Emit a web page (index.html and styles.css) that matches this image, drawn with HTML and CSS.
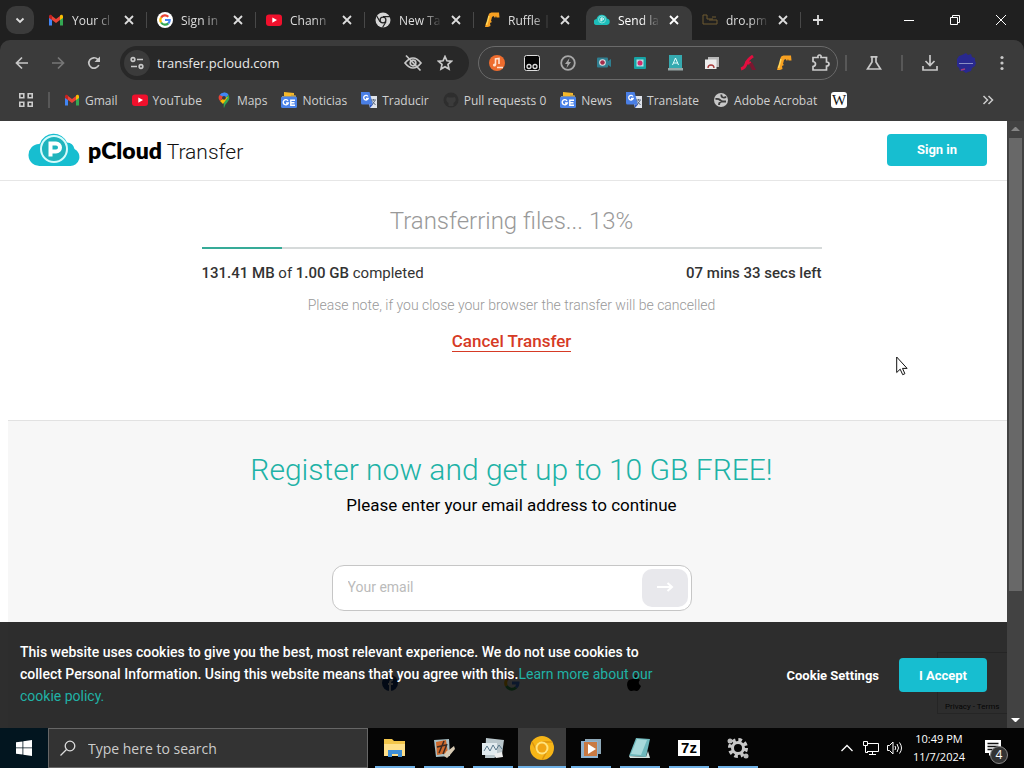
FILE: index.html
```html
<!DOCTYPE html>
<html lang="en">
<head>
    <meta charset="UTF-8">
    <meta name="viewport" content="width=device-width, initial-scale=1.0">
    <title>pCloud Transfer</title>
    <link rel="stylesheet" href="styles.css">
</head>
<body>
    <svg class="defs" aria-hidden="true">
        <symbol id="close" viewBox="0 0 16 16"><path d="M4 4l8 8M12 4l-8 8" stroke="currentColor" stroke-width="1.8" fill="none"/></symbol>
        <symbol id="gmail" viewBox="0 0 16 16">
            <path d="M1 4v9.500h3V7z" fill="#4285f4"/>
            <path d="M15 4v9.500h-3V7z" fill="#34a853"/>
            <path d="M4 4l4 3 4-3v4l-4 3-4-3z" fill="#ea4335"/>
            <path d="M1 4.500C1 2.500 3 2 4 3.500V8L1 6z" fill="#c5221f"/>
            <path d="M15 4.500c0-2-2-2.500-3-1V8l3-2z" fill="#fbbc04"/>
        </symbol>
        <symbol id="youtube" viewBox="0 0 16 16"><rect y="2.500" width="16" height="11.500" rx="3" fill="#f0102c"/><path d="M6.300 5.500v5.200L11 8.100z" fill="#fff"/></symbol>
        <symbol id="gnews" viewBox="0 0 16 16">
            <path d="M3 0l10 1v5H3z" fill="#f5b829"/><path d="M1 4h9V2.500l5 1V6H1z" fill="#c9a544"/>
            <rect y="4.500" width="16" height="11.500" rx="1.500" fill="#4a82e8"/>
            <path d="M7 8.800a2.600 2.600 0 1 0 .3 2.200H5M14 8.300H9.800v4.900H14M9.800 10.700h3.700" stroke="#fff" stroke-width="1.400" fill="none"/>
        </symbol>
        <symbol id="gtranslate" viewBox="0 0 16 16">
            <path d="M6 4h10v12H9z" fill="#dfe3ea"/>
            <path d="M0 0h8.500l3.500 12.500H1.500A1.500 1.500 0 0 1 0 11z" fill="#4a7fe5"/>
            <path d="M7 4.500a2.300 2.300 0 1 0 .2 2H5" stroke="#fff" stroke-width="1.300" fill="none"/>
            <path d="M10 8h5M12.500 7v1.500M14 8.500l-3 4.500M11.500 9.500l3 3.500" stroke="#5d6a80" fill="none"/>
            <path d="M8.500 12.500H12l-3 3.500z" fill="#2b56c6"/>
        </symbol>
        <symbol id="ruffle" viewBox="0 0 16 16"><path d="M1 15l1-4 1.500-1L4.500 3Q5 .500 7.500.500H15l.5 5h-3l-.5-1.500-1 2L9.500 4 8 5 7 9l1 1-2 1 .5 3-2.500 1z" fill="#f7a021"/><path d="M5 4l-2.500 9" stroke="#ffd75a" stroke-width="1.500"/></symbol>
    </svg>

    <div class="window">
        <header class="tabstrip">
            <button class="tab-search" aria-label="Search tabs"><svg class="icon" viewBox="0 0 16 16"><path d="M4.500 6.500L8 10l3.500-3.500" stroke="#ddd" stroke-width="1.800" fill="none"/></svg></button>
            <div class="tab">
                <svg class="icon"><use href="#gmail"/></svg><span class="tab-title">Your cl</span>
                <button class="tab-close" aria-label="Close"><svg class="icon"><use href="#close"/></svg></button>
            </div>
            <div class="tab">
                <svg class="icon" viewBox="0 0 16 16"><circle cx="8" cy="8" r="8" fill="#fff"/><g fill="none" stroke-width="2.200"><path d="M4.100 5.600A4.700 4.700 0 0 1 11.300 4.700" stroke="#ea4335"/><path d="M4.100 10.500A4.700 4.700 0 0 1 4.100 5.500" stroke="#fbbc04"/><path d="M11.300 11.400A4.700 4.700 0 0 1 4.100 10.500" stroke="#34a853"/><path d="M8 8h4.700a4.700 4.700 0 0 1-1.400 3.400" stroke="#4285f4"/></g></svg>
                <span class="tab-title">Sign in</span>
                <button class="tab-close" aria-label="Close"><svg class="icon"><use href="#close"/></svg></button>
            </div>
            <div class="tab">
                <svg class="icon"><use href="#youtube"/></svg><span class="tab-title">Chann</span>
                <button class="tab-close" aria-label="Close"><svg class="icon"><use href="#close"/></svg></button>
            </div>
            <div class="tab">
                <svg class="icon" viewBox="0 0 16 16"><circle cx="8" cy="8" r="7.500" fill="#d6d6d6"/><circle cx="8" cy="8" r="2.900" fill="#d6d6d6" stroke="#222" stroke-width="1.300"/><path d="M8 4.600h7M5 9.700L1.700 4M11 9.700L7.500 15.500" stroke="#222" stroke-width="1.200"/></svg>
                <span class="tab-title">New Ta</span>
                <button class="tab-close" aria-label="Close"><svg class="icon"><use href="#close"/></svg></button>
            </div>
            <div class="tab before-active">
                <svg class="icon"><use href="#ruffle"/></svg><span class="tab-title">Ruffle |</span>
                <button class="tab-close" aria-label="Close"><svg class="icon"><use href="#close"/></svg></button>
            </div>
            <div class="tab active">
                <svg class="icon" viewBox="0 0 16 16"><path d="M3 13a3 3 0 0 1-.5-6A5.500 5.500 0 0 1 13 6.500 3.300 3.300 0 0 1 13 13z" fill="#1dbdb9"/><circle cx="8" cy="7.500" r="3.500" fill="none" stroke="#7fdedb"/><path d="M7 9.500V6h1.500a1 1 0 0 1 0 2H7" stroke="#fff" fill="none"/></svg>
                <span class="tab-title">Send la</span>
                <button class="tab-close" aria-label="Close"><svg class="icon"><use href="#close"/></svg></button>
            </div>
            <div class="tab">
                <svg class="icon" viewBox="0 0 16 16"><path d="M1 3h4v4h6M1 3v9h14V8H7M10 5h4" stroke="#6f5b31" fill="none"/></svg>
                <span class="tab-title">dro.pm</span>
                <button class="tab-close" aria-label="Close"><svg class="icon"><use href="#close"/></svg></button>
            </div>
            <button class="new-tab" aria-label="New tab"><svg class="icon" viewBox="0 0 16 16"><path d="M8 3v10M3 8h10" stroke="currentColor" stroke-width="1.800"/></svg></button>
            <div class="window-controls">
                <button aria-label="Minimize"><svg class="icon-sm" viewBox="0 0 12 12"><path d="M1 6.500h10" stroke="#fff"/></svg></button>
                <button aria-label="Restore"><svg class="icon-sm" viewBox="0 0 12 12"><path d="M1.500 3.500h7v7h-7zM3.500 3.500v-2h7v7h-2" stroke="#fff" fill="none"/></svg></button>
                <button aria-label="Close window"><svg class="icon-sm" viewBox="0 0 12 12"><path d="M1 1l10 10M11 1L1 11" stroke="#fff"/></svg></button>
            </div>
        </header>

        <nav class="toolbar">
            <button class="tool" aria-label="Back"><svg class="icon" viewBox="0 0 16 16"><path d="M14 8H3M8 2.500L2.500 8 8 13.500"/></svg></button>
            <button class="tool dim" aria-label="Forward"><svg class="icon" viewBox="0 0 16 16"><path d="M2 8h11M8 2.500L13.500 8 8 13.500"/></svg></button>
            <button class="tool" aria-label="Reload"><svg class="icon" viewBox="0 0 16 16"><path d="M12.800 10A5.200 5.200 0 1 1 11.700 4.300L13 5.600"/><path d="M14 1.500v5.500H8.500z" fill="currentColor" stroke="none"/></svg></button>
            <div class="omnibox">
                <button class="site-info" aria-label="Site information"><svg class="icon" viewBox="0 0 16 16"><circle cx="4" cy="4.500" r="1.800"/><path d="M8 4.500h6M2 11.500h6"/><circle cx="12" cy="11.500" r="1.800"/></svg></button>
                <input type="text" aria-label="Address" value="transfer.pcloud.com">
                <button class="omni-btn" aria-label="Tracking protection"><svg class="icon-lg" viewBox="0 0 20 20"><path d="M2 10q8-10 16 0-8 10-16 0z"/><circle cx="10" cy="10" r="2.800"/><path d="M3 2.500l14.500 15"/></svg></button>
                <button class="omni-btn" aria-label="Bookmark"><svg class="icon" viewBox="0 0 16 16"><path d="M8 1.500l1.900 4.300 4.600.5L11 9.400l1 4.700-4-2.400-4 2.400 1-4.700L1.500 6.300l4.600-.5z"/></svg></button>
            </div>
            <div class="extensions">
                <button aria-label="Music"><svg class="icon" viewBox="0 0 16 16"><circle cx="8" cy="8" r="8" fill="#ee6c2e"/><path d="M6.500 10V4l3.500-.5V9" stroke="#ffe2cf" stroke-width="1.600" fill="none"/><circle cx="5.500" cy="10" r="1.600" fill="#ffe2cf"/><path d="M8 12.500h6" stroke="#ffe2cf" stroke-width="1.500"/></svg></button>
                <button aria-label="Tampermonkey"><svg class="icon" viewBox="0 0 16 16"><rect x=".5" y=".5" width="15" height="15" rx="2" fill="#050505" stroke="#ddd"/><circle cx="5" cy="11.500" r="2" fill="none" stroke="#ddd" stroke-width="1.300"/><circle cx="11" cy="11.500" r="2" fill="none" stroke="#ddd" stroke-width="1.300"/></svg></button>
                <button aria-label="Energy"><svg class="icon" viewBox="0 0 16 16"><circle cx="8" cy="8" r="6.800" fill="none" stroke="#a8a8a8" stroke-width="1.800"/><path d="M9.500 3L5 9h2.500L6.500 13 11 7H8.500z" fill="#a8a8a8"/></svg></button>
                <button aria-label="Recorder"><svg class="icon" viewBox="0 0 16 16"><rect x="1" y="2.500" width="11" height="10" rx="1" fill="#2f7f91"/><path d="M12 6l3-2v8l-3-2z" fill="#2f7f91"/><circle cx="6.500" cy="7.500" r="3.300" fill="#e6e6e6"/><circle cx="6.500" cy="7.500" r="2.300" fill="#a32b4a"/></svg></button>
                <button aria-label="Capture"><svg class="icon" viewBox="0 0 16 16"><rect x="2" y="2" width="12" height="12" rx="1" fill="#16a3a5"/><rect x="4.500" y="4.500" width="7" height="7" fill="#b9dbe2"/><circle cx="8" cy="8" r="2.500" fill="#d42a6a"/></svg></button>
                <button aria-label="Font finder"><svg class="icon" viewBox="0 0 16 16"><path d="M1 0h13v13H1z" fill="#35aab0"/><path d="M0 13h15v2.500H0z" fill="#98a9a8"/><path d="M4.500 10L7.500 3l3 7M5.500 8h4" stroke="#e8ffff" fill="none"/></svg></button>
                <button aria-label="Gallery"><svg class="icon" viewBox="0 0 16 16"><path d="M4 2h11v10H4z" fill="#b8b8b8"/><path d="M1 4.500h11.500V14H1z" fill="#eee"/><path d="M4 13a3 3 0 0 1 6 0" stroke="#a73b3b" stroke-width="1.300" fill="none"/></svg></button>
                <button aria-label="Flash"><svg class="icon" viewBox="0 0 16 16"><path d="M1 14Q5 13 6 9t7-8M5 8h6" stroke="#e20e3f" stroke-width="3" fill="none"/><path d="M9 9l3 6h4l-4-8z" fill="#7a1730"/></svg></button>
                <button aria-label="Ruffle"><svg class="icon"><use href="#ruffle"/></svg></button>
                <button aria-label="Extensions"><svg class="icon-lg" viewBox="0 0 20 20"><path d="M3 4.500h5q-.5-2.500 1.500-2.500t1.500 2.500h5.500V9Q19 9 19 11t-2.500 2v4H3v-3.500q2.500-.5 2.500-2.500T3 8.500z" fill="none" stroke="#ccc" stroke-width="1.700"/></svg></button>
            </div>
            <span class="divider"></span>
            <button class="tool" aria-label="Labs"><svg class="icon" viewBox="0 0 16 16"><path d="M4.500 1.800h7M6 2v5l-4.500 7h13L10 7V2"/></svg></button>
            <span class="divider"></span>
            <button class="tool" aria-label="Downloads"><svg class="icon" viewBox="0 0 16 16"><path d="M8 0v10M3.500 6L8 10.500 12.500 6M1 11v4h14v-4"/></svg></button>
            <button class="tool" aria-label="Profile"><svg class="icon-lg" viewBox="0 0 20 20"><path d="M10 0l2 2 3-1 1 3 3 1v3l1 2-1 3-3 2-1 3-3 1-2 1-3-2-3 0-1-3-2-2V6l2-3 3-1z" fill="#29298f" stroke="none"/><path d="M3 10.500h14" stroke="#8a8fc4" stroke-width="1"/><path d="M5 17l4-1" stroke="#a33c7d"/></svg></button>
            <button class="tool" aria-label="Menu"><svg class="icon" viewBox="0 0 16 16"><g fill="currentColor" stroke="none"><circle cx="8" cy="2.500" r="1.600"/><circle cx="8" cy="8" r="1.600"/><circle cx="8" cy="13.500" r="1.600"/></g></svg></button>
        </nav>

        <nav class="bookmarks">
            <button class="apps" aria-label="Apps"><svg class="icon" viewBox="0 0 16 16"><path d="M1.800 1.800h4v4h-4zM10.200 1.800h4v4h-4zM1.800 10.200h4v4h-4zM10.200 10.200h4v4h-4z" stroke="#ccc" stroke-width="1.600" fill="none"/></svg></button>
            <span class="divider"></span>
            <a href="#"><svg class="icon"><use href="#gmail"/></svg>Gmail</a>
            <a href="#"><svg class="icon"><use href="#youtube"/></svg>YouTube</a>
            <a href="#"><svg class="icon" viewBox="0 0 16 16"><path d="M8 .5A5.300 5.300 0 0 1 13.300 6c0 3.500-4 5-5 9.500H7.700Z" fill="#34a853"/><path d="M8 .5A5.300 5.300 0 0 0 3.500 3l5 4 4-4.500A5 5 0 0 0 8 .5z" fill="#4285f4"/><path d="M3.500 3A5 5 0 0 0 4 9l4-4z" fill="#ea4335"/><path d="M4 9l3 3 5-7-4 1z" fill="#fbbc04"/><circle cx="8" cy="5.800" r="1.900" fill="#3a3a3a"/></svg>Maps</a>
            <a href="#"><svg class="icon"><use href="#gnews"/></svg>Noticias</a>
            <a href="#"><svg class="icon"><use href="#gtranslate"/></svg>Traducir</a>
            <a href="#"><svg class="icon" viewBox="0 0 16 16"><circle cx="8" cy="8" r="7.500" fill="#2e2e2e"/><path d="M5.500 14v-3Q2 9 4 5l2 .5h4L12 5q2 4-1.500 6v3z" fill="#3b3b3b"/></svg>Pull requests 0</a>
            <a href="#"><svg class="icon"><use href="#gnews"/></svg>News</a>
            <a href="#"><svg class="icon"><use href="#gtranslate"/></svg>Translate</a>
            <a href="#"><svg class="icon" viewBox="0 0 16 16"><circle cx="8" cy="8" r="7" fill="#c8c8c8"/><path d="M2.500 7q3-.5 4.500 1t3 1.500 3 0M6 13q0-3 2.500-3.500M8.500 2.500Q8 5 10 5.500t3-1" stroke="#3c3c3c" stroke-width="1.800" fill="none"/></svg>Adobe Acrobat</a>
            <a href="#" aria-label="Wikipedia"><span class="wiki">W</span></a>
            <button class="more" aria-label="More bookmarks"><svg class="icon-sm" viewBox="0 0 12 12"><path d="M1.500 2l4 4-4 4M6.500 2l4 4-4 4" stroke="#ccc" stroke-width="1.500" fill="none"/></svg></button>
        </nav>

        <div class="viewport">
            <div class="page">
                <div class="site-header">
                    <a class="logo" href="#">
                        <svg class="logo-cloud" viewBox="0 0 52 36"><path d="M12 34a11 11 0 0 1-1-22 4 4 0 0 1 1-.5A14.500 14.500 0 0 1 39 10.500q6 0 7.500 6.500A9 9 0 0 1 42 34z" fill="#17bed0"/><circle cx="26" cy="17" r="13" fill="#1fb4bd" stroke="#d5fbfb" stroke-width="2"/><path d="M22.500 24.500V11.500H28a4 4 0 0 1 0 8h-5.500" stroke="#fff" stroke-width="4" fill="none"/></svg>
                        <span><span class="logo-name">pCloud</span> Transfer</span>
                    </a>
                    <button class="btn sign-in">Sign in</button>
                </div>

                <section class="transfer">
                    <h1>Transferring files... 13%</h1>
                    <div class="progress"><div class="progress-bar" style="width: 13%"></div></div>
                    <div class="stats">
                        <span><strong>131.41 MB</strong> of <strong>1.00 GB</strong> completed</span>
                        <strong>07 mins 33 secs left</strong>
                    </div>
                    <p class="note">Please note, if you close your browser the transfer will be cancelled</p>
                    <a class="cancel" href="#">Cancel Transfer</a>
                </section>

                <section class="register">
                    <h2>Register now and get up to 10 GB FREE!</h2>
                    <p>Please enter your email address to continue</p>
                    <form class="email-form">
                        <input type="email" aria-label="Your email" placeholder="Your email">
                        <button type="button" aria-label="Continue"><svg class="icon-lg" viewBox="0 0 20 20"><path d="M2 9h15M12.500 5l4.500 4-4.500 4" stroke="#fff" stroke-width="2" fill="none"/></svg></button>
                    </form>
                    <div class="socials">
                        <svg class="icon" viewBox="0 0 16 16"><circle cx="8" cy="8" r="8" fill="#123a7a"/><path d="M8 16V8q0-3 3-3M6 9h5" stroke="#fff" stroke-width="2" fill="none"/></svg>
                        <svg class="icon" viewBox="0 0 16 16"><g fill="none" stroke-width="3"><path d="M2.500 5A6 6 0 0 1 12 3.500" stroke="#ea4335"/><path d="M2.500 11a6 6 0 0 1 0-6" stroke="#fbbc04"/><path d="M12 12.500A6 6 0 0 1 2.500 11" stroke="#34a853"/><path d="M8 8h6a6 6 0 0 1-2 4.500" stroke="#4285f4"/></g></svg>
                        <svg class="icon" viewBox="0 0 16 16"><path d="M8 4q4-2 6 1-3 3 1 6-2 5-4.500 5-2.500-1-5 0Q2 16 1 10q0-7 7-6zM8 3q0-3 3-3 0 3-3 3z"/></svg>
                    </div>
                </section>

                <div class="captcha-badge">Privacy - Terms</div>

                <div class="cookie-bar">
                    <p>This website uses cookies to give you the best, most relevant experience. We do not use cookies to collect Personal Information. Using this website means that you agree with this.<a href="#">Learn more about our cookie policy.</a></p>
                    <button class="cookie-settings">Cookie Settings</button>
                    <button class="btn accept">I Accept</button>
                </div>

                <svg class="cursor" viewBox="0 0 12 20"><path d="M.7 1v15.500l3.500-3.300 2.500 5.500 2.200-1-2.400-5.300h4.600z" fill="#fff" stroke="#111"/></svg>
            </div>
            <div class="scrollbar">
                <span class="arrow up"></span>
                <div class="track"><div class="thumb"></div></div>
                <span class="arrow down"></span>
            </div>
        </div>

        <footer class="taskbar">
            <button class="start" aria-label="Start"><svg class="icon" viewBox="0 0 16 16"><path d="M0 2.300l6.500-.9v6.100H0zM7.300 1.300L16 0v7.500H7.300zM0 8.300h6.500v6.300L0 13.700zM7.300 8.300H16V16l-8.700-1.200z" fill="#fff"/></svg></button>
            <label class="search">
                <svg class="icon" viewBox="0 0 16 16"><circle cx="10" cy="6" r="4.800" stroke="#ddd" stroke-width="1.300" fill="none"/><path d="M6.500 9.500L.5 15.500" stroke="#ddd" stroke-width="1.300"/></svg>
                <input type="text" placeholder="Type here to search">
            </label>
            <div class="apps-row">
                <button aria-label="File Explorer"><svg class="app-icon" viewBox="0 0 24 24"><path d="M1 3h8l2 2h11v15H1z" fill="#f3c64b"/><path d="M1 8h21v12H1z" fill="#ffe08a"/><path d="M5 21v-7h14v7h-4v-3H9v3z" fill="#3f8fd6"/></svg></button>
                <button aria-label="Image tool"><svg class="app-icon" viewBox="0 0 24 24"><path d="M2 4l15-1 1 17-14 1z" fill="#a9c1c6"/><path d="M4 6l10-2 2 13-11 2z" fill="#cf6a2c"/><path d="M7 17L12 5M11 18l4-10M5 11l9-2" stroke="#3a2a22" stroke-width="1.500"/><path d="M12 20q2-6 5-6l5-4 1 3-5 6-3 3z" fill="#d8cbb4"/></svg></button>
                <button aria-label="Performance"><svg class="app-icon" viewBox="0 0 24 24"><path d="M5 2l18 2-2 14-8 4H4z" fill="#b9c6cb"/><path d="M1 7h15v12H1z" fill="#e1eaee"/><path d="M3 15l3-5 3 5 3-6 3 5 3-5 3 4" stroke="#5a788b" fill="none"/><path d="M13 18l8-2 1 5-7 1z" fill="#eee"/></svg></button>
                <button class="current" aria-label="Chrome Canary"><svg class="app-icon" viewBox="0 0 24 24"><circle cx="12" cy="12" r="12" fill="#f6b517"/><path d="M12 6h10M7 15L2 6M17 15l-5 9" stroke="#dc9410" stroke-width="1.500"/><circle cx="12" cy="12" r="6.500" fill="#ffe27b"/><circle cx="12" cy="12" r="4.500" fill="#f0a514"/></svg></button>
                <button aria-label="Media player"><svg class="app-icon" viewBox="0 0 24 24"><path d="M6 3h16v15H6z" fill="#8fa9b9"/><path d="M2 5h17v17H2z" fill="#8fb3cf"/><path d="M5 6h13v14H5z" fill="#c97a43"/><path d="M9 8v10l8-5z" fill="#fff"/></svg></button>
                <button aria-label="Notepad"><svg class="app-icon" viewBox="0 0 24 24"><path d="M8 2l14 1-4 18L1 20z" fill="#6fb9bd"/><path d="M9 3l10 1-6 15-10-1z" fill="#a8dadb"/><path d="M1 20l17 1 2-6 2 7H2z" fill="#d6e6e3"/></svg></button>
                <button aria-label="7-Zip"><span class="zip">7z</span></button>
                <button aria-label="Settings"><svg class="app-icon" viewBox="0 0 24 24"><circle cx="12" cy="12" r="8" fill="none" stroke="#c8c8c8" stroke-width="4" stroke-dasharray="3.500 2.800"/><circle cx="12" cy="12" r="5.500" fill="none" stroke="#c8c8c8" stroke-width="3"/><circle cx="4" cy="5" r="2.500" fill="#bbb"/><circle cx="20" cy="20" r="2.500" fill="#bbb"/></svg></button>
            </div>
            <div class="tray">
                <button aria-label="Show hidden icons"><svg class="icon" viewBox="0 0 16 16"><path d="M2.500 11L8 5.500l5.500 5.500" stroke="#fff" stroke-width="1.300" fill="none"/></svg></button>
                <button aria-label="Network"><svg class="icon" viewBox="0 0 16 16"><path d="M4 3.500h11.500v8H4M9.500 11.500v3M6 14.500h7M.5 1.500h4v4h-4zM2.500 5.500v7H5" stroke="#fff" fill="none"/></svg></button>
                <button aria-label="Volume"><svg class="icon" viewBox="0 0 16 16"><path d="M.5 5.500h2L6 2v12l-3.500-3.500h-2zM8 6q1.500 2 0 4M10 4q3 4 0 8M12.500 2.500q4 5.500 0 11" stroke="#fff" fill="none"/></svg></button>
                <div class="clock"><span>10:49 PM</span><span>11/7/2024</span></div>
                <button class="notify" aria-label="4 notifications"><svg class="icon" viewBox="0 0 16 16"><path d="M0 0h16v13H7l-3 3v-3H0z" fill="#fff"/><path d="M2.500 3.500h11M2.500 6.500h11M2.500 9.500h11" stroke="#111" stroke-width="1.300"/></svg><span class="badge">4</span></button>
            </div>
        </footer>
    </div>
</body>
</html>
```

FILE: styles.css
```css
:root {
    --strip-color: #202020;
    --toolbar-color: #3b3b3b;
    --omnibox-color: #282828;
    --icon-color: #c8c8c8;
    --accent-color: #17bed0;
    --link-color: #20b2a6;
    --ui-font: "Open Sans", "Noto Sans", sans-serif;
    --page-font: Roboto, "Liberation Sans", sans-serif;
}

* {
    box-sizing: border-box;
}

body {
    margin: 0;
    font-family: var(--ui-font);
    font-size: 12px;
}

button {
    display: flex;
    justify-content: center;
    align-items: center;
    padding: 0;
    border: none;
    background: none;
    color: inherit;
    font-family: inherit;
    cursor: pointer;
}

input {
    min-width: 0;
    border: none;
    outline: none;
    background: none;
    font-family: inherit;
}

h1, h2, p {
    margin: 0;
}

svg {
    flex: none;
}

.defs {
    display: none;
}

.icon {
    width: 16px;
    height: 16px;
}

.icon-sm {
    width: 12px;
    height: 12px;
}

.icon-lg {
    width: 20px;
    height: 20px;
}

.window {
    display: flex;
    flex-direction: column;
    height: 100vh;
    overflow: hidden;
    background: var(--strip-color);
}

/* tabs */
.tabstrip {
    display: flex;
    flex: none;
    align-items: flex-end;
    height: 40px;
    padding-left: 6px;
    color: #ddd;
}

.tab-search {
    width: 28px;
    height: 28px;
    margin: 0 4px 6px 0;
    border-radius: 10px;
    background: #3b3b3b;
}

.tab {
    position: relative;
    display: flex;
    flex: 0 1 109px;
    align-items: center;
    min-width: 0;
    height: 34px;
    padding: 0 10px 6px;
}

.tab::after {
    content: "";
    position: absolute;
    right: 0;
    top: 6px;
    width: 1px;
    height: 16px;
    background: #484848;
}

.tab-title {
    flex: 1;
    margin: 0 6px 0 8px;
    white-space: nowrap;
    -webkit-mask-image: linear-gradient(to right, #000 55%, transparent);
    mask-image: linear-gradient(to right, #000 55%, transparent);
}

.tab.active {
    flex-basis: 106px;
    margin-left: 3px;
    padding-left: 8px;
    border-radius: 10px 10px 0 0;
    background: var(--toolbar-color);
    color: #fff;
}

.tab.active::after,
.tab.before-active::after {
    display: none;
}

.new-tab {
    width: 34px;
    height: 28px;
    margin-bottom: 6px;
}

.window-controls {
    display: flex;
    align-self: stretch;
    margin-left: auto;
}

.window-controls button {
    width: 46px;
}

/* toolbar */
.toolbar {
    display: flex;
    flex: none;
    align-items: center;
    height: 46px;
    padding: 0 4px;
    border-radius: 10px 10px 0 0;
    background: var(--toolbar-color);
    color: var(--icon-color);
}

.tool {
    width: 36px;
    height: 34px;
}

.tool svg,
.omnibox svg {
    fill: none;
    stroke: currentColor;
    stroke-width: 1.7;
}

.dim {
    color: #777;
}

.omnibox {
    display: flex;
    flex: 1;
    align-items: center;
    min-width: 0;
    height: 34px;
    margin: 0 9px 0 8px;
    padding: 0 8px 0 4px;
    border-radius: 17px;
    background: var(--omnibox-color);
}

.site-info {
    width: 26px;
    height: 26px;
    border-radius: 50%;
    background: #3b3b3b;
}

.omnibox input {
    flex: 1;
    margin-left: 7px;
    padding: 0;
    color: #e8e8e8;
    font-size: 13px;
}

.omni-btn {
    width: 32px;
}

.extensions {
    display: flex;
    height: 34px;
    border: 1px solid #6a6a6a;
    border-radius: 17px;
}

.extensions button {
    width: 36px;
}

.extensions button:first-child,
.extensions button:last-child {
    width: 35px;
}

.divider {
    width: 2px;
    height: 16px;
    margin: 0 9px;
    background: #585858;
}

.extensions + .divider {
    margin-left: 7px;
}

/* bookmarks */
.bookmarks {
    display: flex;
    flex: none;
    align-items: center;
    height: 35px;
    padding: 0 30px 7px 18px;
    background: var(--toolbar-color);
    color: #d0d0d0;
}

.bookmarks .divider {
    margin: 0 14px;
}

.bookmarks a {
    display: flex;
    align-items: center;
    gap: 5px;
    margin-right: 14px;
    color: inherit;
    text-decoration: none;
    white-space: nowrap;
}

.wiki {
    width: 16px;
    height: 16px;
    border-radius: 3px;
    background: #fff;
    color: #111;
    font: 15px/16px "Liberation Serif", serif;
    text-align: center;
}

.more {
    margin-left: auto;
}

/* page */
.viewport {
    display: flex;
    flex: 1;
    min-height: 0;
}

.page {
    position: relative;
    flex: 1;
    overflow: hidden;
    background: #fff;
    font-family: var(--page-font);
}

.site-header {
    display: flex;
    justify-content: space-between;
    align-items: center;
    height: 60px;
    padding: 0 20px 2px 28px;
    border-bottom: 1px solid #e6e6e6;
}

.logo {
    display: flex;
    align-items: center;
    gap: 8px;
    color: #111;
    font-size: 21px;
    font-weight: 300;
    text-decoration: none;
}

.logo-cloud {
    width: 52px;
    height: 36px;
}

.logo-name {
    color: #000;
    font-family: Lato, sans-serif;
    font-size: 23px;
    font-weight: 800;
}

.btn {
    border-radius: 4px;
    background: var(--accent-color);
    color: #fff;
    font-weight: 700;
    font-size: 13px;
}

.sign-in {
    width: 100px;
    height: 32px;
}

.transfer {
    box-sizing: content-box;
    max-width: 620px;
    margin: 0 auto;
    padding: 24px 0 68px 16px;
    color: #333;
    text-align: center;
}

.transfer h1 {
    color: #999;
    font-size: 24px;
    font-weight: 300;
    line-height: 32px;
}

.progress {
    height: 2px;
    margin-top: 10px;
    background: #d6dada;
}

.progress-bar {
    height: 2px;
    background: #36ab98;
}

.stats {
    display: flex;
    justify-content: space-between;
    margin-top: 14px;
    font-size: 15px;
    line-height: 20px;
}

.stats strong {
    font-weight: 500;
}

.note {
    margin-top: 12px;
    color: #999;
    font-size: 14px;
    font-weight: 300;
    line-height: 20px;
}

.cancel {
    display: inline-block;
    margin-top: 16px;
    border-bottom: 1px solid #d63a25;
    color: #d63a25;
    font-size: 17px;
    font-weight: 500;
    line-height: 20px;
    text-decoration: none;
}

.register {
    margin-left: 8px;
    padding: 28px 0 40px 8px;
    border-top: 1px solid #e2e2e2;
    background: #f7f7f7;
    color: #000;
    text-align: center;
}

.register h2 {
    color: var(--link-color);
    font-size: 30px;
    font-weight: 300;
    line-height: 42px;
}

.register p {
    margin-top: 4px;
    font-size: 17px;
    line-height: 20px;
}

.email-form {
    display: flex;
    max-width: 360px;
    height: 46px;
    margin: 50px auto 0;
    padding: 3px;
    border: 1px solid #c6c6c6;
    border-radius: 12px;
    background: #fff;
}

.email-form input {
    flex: 1;
    padding: 0 12px 2px;
    font-size: 14px;
}

.email-form input::placeholder {
    color: #bbb;
}

.email-form button {
    width: 46px;
    border-radius: 10px;
    background: #e8e8ec;
}

.socials {
    display: flex;
    justify-content: center;
    gap: 106px;
    margin-top: 64px;
}

.captcha-badge {
    position: absolute;
    right: 0;
    bottom: 14px;
    width: 70px;
    height: 62px;
    padding: 48px 0 0 7px;
    border: 1px solid #ccc;
    border-right: none;
    color: #222;
    font-size: 8px;
    line-height: 12px;
}

.cookie-bar {
    position: absolute;
    left: 0;
    right: 0;
    bottom: 0;
    display: flex;
    align-items: center;
    min-height: 106px;
    padding: 0 20px;
    background: rgba(0, 0, 0, 0.82);
    color: #fff;
    font-size: 14px;
    line-height: 22px;
}

.cookie-bar p {
    flex: 0 1 640px;
    padding-bottom: 2px;
    font-weight: 500;
}

.cookie-bar a {
    color: var(--link-color);
    font-weight: 400;
    text-decoration: none;
}

.cookie-settings {
    margin: 0 20px 0 auto;
    font-size: 13px;
    font-weight: 700;
}

.accept {
    width: 88px;
    height: 34px;
}

.cursor {
    position: absolute;
    top: 235px;
    right: 99px;
    width: 12px;
    height: 20px;
}

.scrollbar {
    display: flex;
    flex-direction: column;
    width: 17px;
    background: #424242;
}

.arrow {
    width: 9px;
    margin: 6px 4px;
    border: 4px solid transparent;
}

.up {
    margin-bottom: 7px;
    border-top: none;
    border-bottom: 4px solid #868686;
}

.down {
    border-top: 4px solid #fff;
    border-bottom: none;
}

.track {
    flex: 1;
    padding: 0 2px;
}

.thumb {
    height: 79%;
    background: #686868;
}

/* taskbar */
.taskbar {
    display: flex;
    flex: none;
    height: 40px;
    background: #050505;
    color: #fff;
}

.start {
    width: 48px;
    background: #02151f;
}

.search {
    display: flex;
    flex: 0 1 320px;
    align-items: center;
    gap: 12px;
    padding: 0 11px;
    border: 1px solid #666;
    background: #333;
}

.search input {
    flex: 1;
    padding: 0;
    font-size: 14px;
}

.search input::placeholder {
    color: #ccc;
}

.apps-row {
    display: flex;
    gap: 1px;
    margin-left: 3px;
}

.apps-row button {
    position: relative;
    width: 48px;
}

.apps-row button::after {
    content: "";
    position: absolute;
    left: 4px;
    right: 4px;
    bottom: 0;
    height: 2px;
    background: #6fb1e6;
}

.apps-row .current {
    background: #3c3c3c;
}

.apps-row .current::after {
    left: 0;
    right: 0;
}

.app-icon {
    width: 24px;
    height: 24px;
}

.zip {
    width: 22px;
    height: 16px;
    background: #fff;
    color: #000;
    font: bold 15px/16px "Liberation Sans", sans-serif;
}

.tray {
    display: flex;
    align-items: center;
    margin-left: auto;
    padding-right: 10px;
}

.tray button {
    width: 24px;
    height: 40px;
}

.clock {
    display: flex;
    flex-direction: column;
    width: 64px;
    font-size: 11px;
    line-height: 18px;
    text-align: center;
}

.tray .notify {
    position: relative;
    width: 43px;
}

.badge {
    position: absolute;
    right: 6px;
    bottom: 4px;
    width: 18px;
    height: 18px;
    border: 1px solid #888;
    border-radius: 50%;
    background: #333;
    font-size: 12px;
    line-height: 16px;
}
```
